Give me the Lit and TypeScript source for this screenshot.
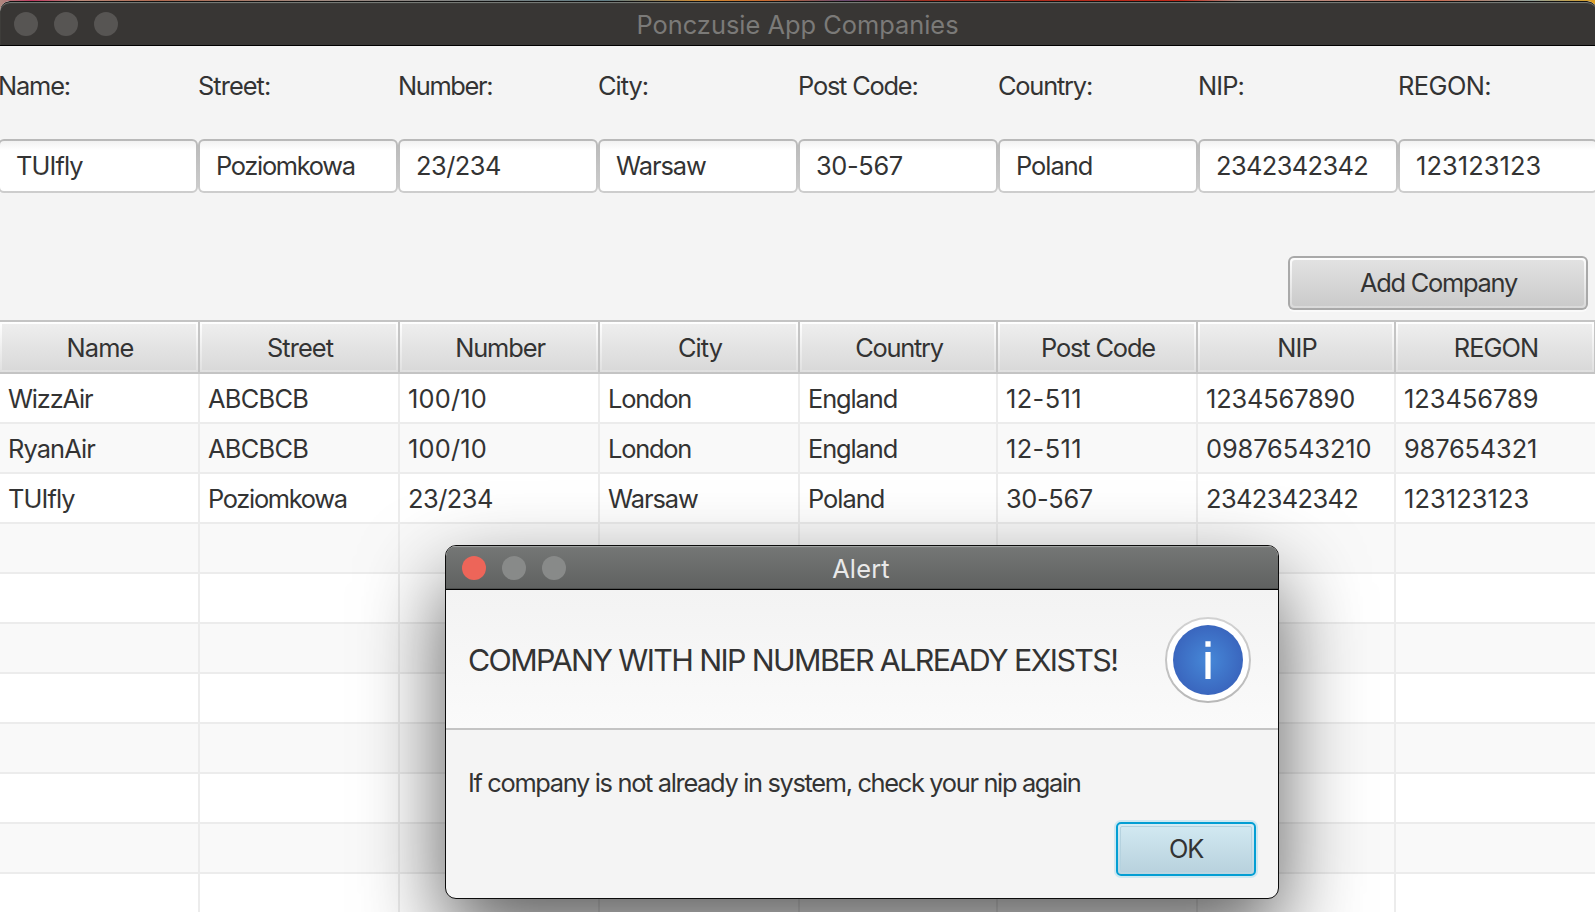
import { LitElement, html, css } from "lit";
import { customElement } from "lit/decorators.js";

const COLUMNS = ["Name", "Street", "Number", "City", "Country", "Post Code", "NIP", "REGON"];

const FIELDS = [
  { label: "Name:", value: "TUIfly" },
  { label: "Street:", value: "Poziomkowa" },
  { label: "Number:", value: "23/234" },
  { label: "City:", value: "Warsaw" },
  { label: "Post Code:", value: "30-567" },
  { label: "Country:", value: "Poland" },
  { label: "NIP:", value: "2342342342" },
  { label: "REGON:", value: "123123123" },
];

const ROWS: string[][] = [
  ["WizzAir", "ABCBCB", "100/10", "London", "England", "12-511", "1234567890", "123456789"],
  ["RyanAir", "ABCBCB", "100/10", "London", "England", "12-511", "09876543210", "987654321"],
  ["TUIfly", "Poziomkowa", "23/234", "Warsaw", "Poland", "30-567", "2342342342", "123123123"],
  ...Array.from({ length: 8 }, () => Array(8).fill("")),
];

// Optical tracking in pixels; strings without an entry use the inherited value.
const TRACKING: Record<string, number> = {
  "Name:": -1.15, "Street:": -0.95, "Number:": -1.35, "City:": -1, "Post Code:": -1.2,
  "Country:": -1.2, "REGON:": -0.55, "Poziomkowa": -1.3, "23/234": -0.5, "Warsaw": -1.05,
  "30-567": -0.35, "Poland": -1, "2342342342": -0.6, "123123123": 0.1, "100/10": 0.2,
  "12-511": 0.4, "1234567890": -0.15, "123456789": 0, "09876543210": -0.1, "987654321": -0.15,
  "WizzAir": -1.15, "ABCBCB": -0.7, "London": -1.2, "England": -1.1, "Number": -1.1,
  "Country": -1.25, "Post Code": -1.15,
};

const text = (s: string) =>
  s in TRACKING ? html`<span style="letter-spacing:${TRACKING[s]}px">${s}</span>` : html`<span>${s}</span>`;

const base = css`
  * { box-sizing: border-box; }
  :host {
    font-family: Inter, "Liberation Sans", sans-serif;
    font-size: 25.4px;
    letter-spacing: -0.9px;
    color: #333;
  }
  .lights { display: flex; gap: 16px; }
  .light { width: 24px; height: 24px; border-radius: 50%; }
`;

@customElement("company-form")
export class CompanyForm extends LitElement {
  static styles = [base, css`
    :host { display: block; }
    .fields { display: flex; width: 1600px; margin-left: -2px; padding-top: 22px; }
    .field { flex: 0 0 200px; }
    .label { height: 36px; line-height: 36px; margin-bottom: 35px; white-space: nowrap; }
    .box {
      height: 54px; width: 200px; border-radius: 6px; padding: 2px;
      background: linear-gradient(#b9b9b9, #cdcdcd);
    }
    .input {
      height: 50px; border-radius: 4px; line-height: 50px; padding-left: 16px;
      background: linear-gradient(#f1f1f1, #fff 9px);
    }
    .actions { display: flex; justify-content: flex-end; padding: 63px 9px 10px 0; }
    .btn {
      width: 300px; height: 54px; border-radius: 6px; padding: 2px; background: #a9a9a9;
      box-shadow: 0 2px 0 #fafafa;
    }
    .rim { height: 50px; border-radius: 4px; padding: 2px; background: linear-gradient(#fdfdfd, #d9d9d9); }
    .face {
      height: 46px; border-radius: 3px; background: linear-gradient(#e2e2e2, #cbcbcb);
      text-align: center; line-height: 46px; padding-left: 1px; letter-spacing: -1.25px;
    }
  `];
  render() {
    return html`
      <div class="fields">
        ${FIELDS.map((f) => html`
          <div class="field">
            <div class="label">${text(f.label)}</div>
            <div class="box"><div class="input">${text(f.value)}</div></div>
          </div>`)}
      </div>
      <div class="actions"><div class="btn"><div class="rim"><div class="face">Add Company</div></div></div></div>
    `;
  }
}

@customElement("company-table")
export class CompanyTable extends LitElement {
  static styles = [base, css`
    :host { display: block; width: 1596px; border-top: 2px solid #c4c4c4; background: #fff; }
    .row { display: grid; grid-template-columns: 200px 200px 200px 200px 198px 200px 198px 200px; height: 50px; }
    .head { height: 52px; }
    .th {
      border-right: 2px solid #c4c4c4; border-bottom: 2px solid #c4c4c4; padding: 2px;
      background: linear-gradient(#fff, #e0e0e0);
    }
    .inner { height: 46px; background: linear-gradient(#eee, #d9d9d9); text-align: center; line-height: 47px; padding-left: 2px; }
    .td {
      border-right: 2px solid #ececec; border-bottom: 2px solid #ececec;
      padding: 2px 0 0 8px; line-height: 46px; white-space: nowrap;
    }
    .td:last-child { border-right: none; }
    .alt { background: #f9f9f9; }
  `];
  render() {
    return html`
      <div class="row head">${COLUMNS.map((c) => html`<div class="th"><div class="inner">${text(c)}</div></div>`)}</div>
      ${ROWS.map((r, i) => html`
        <div class="row ${i % 2 ? "alt" : ""}">${r.map((c) => html`<div class="td">${text(c)}</div>`)}</div>`)}
    `;
  }
}

@customElement("alert-dialog")
export class AlertDialog extends LitElement {
  static styles = [base, css`
    :host {
      display: block; width: 834px; height: 354px; border: 1px solid #0c0c0c; border-radius: 11px;
      background: #f4f4f4; box-shadow: 0 36px 84px rgba(0, 0, 0, 0.64); overflow: hidden;
    }
    .bar {
      height: 44px; border-bottom: 1px solid #000; display: grid; grid-template-columns: 1fr auto 1fr;
      padding: 1px 18px 0 16px; align-items: center;
      background: linear-gradient(#757776, #5f6160);
      box-shadow: inset 0 2px 1px -1px #a5a7a6, inset 0 -1px 0 #4c4e4d;
    }
    .red { background: #ed6559; }
    .gray { background: #888a89; }
    .title { color: #e9e9e9; letter-spacing: 0.2px; padding-top: 1px; }
    .header {
      height: 140px; border-bottom: 2px solid #c4c4c4; display: flex; justify-content: space-between;
      padding: 27px 27px 0 22px; background: linear-gradient(#f3f3f3, #fafafa);
    }
    .msg { font-size: 30.4px; letter-spacing: -1.6px; line-height: 86px; white-space: nowrap; }
    .body { padding: 35px 0 0 22px; line-height: 36px; height: 92px; letter-spacing: -1.33px; }
    .foot { display: flex; justify-content: flex-end; padding-right: 22px; }
    .ok {
      width: 140px; height: 54px; border: 2px solid #039ed3; border-radius: 5px; padding: 2px;
      background: linear-gradient(#d5ecf5, #bcd5e0); box-shadow: 0 0 0 2px #cfe8f1;
    }
    .face {
      height: 46px; border: 1px solid #b5d2df; border-radius: 2px; line-height: 43px; text-align: center;
      letter-spacing: -1.2px; background: linear-gradient(#d1e8f1, #b9d2de);
    }
  `];
  render() {
    return html`
      <div class="bar">
        <div class="lights"><div class="light red"></div><div class="light gray"></div><div class="light gray"></div></div>
        <div class="title">Alert</div><div></div>
      </div>
      <div class="header">
        <div class="msg">COMPANY WITH NIP NUMBER ALREADY EXISTS!</div>
        <svg width="86" height="86" viewBox="0 0 86 86">
          <defs>
            <radialGradient id="blue"><stop offset="0" stop-color="#4688d8"/><stop offset="1" stop-color="#3a66be"/></radialGradient>
            <linearGradient id="ring" x2="0" y2="1"><stop offset="0" stop-color="#d2d2d2"/><stop offset="1" stop-color="#b8b8b8"/></linearGradient>
          </defs>
          <circle cx="43" cy="43" r="42" fill="#fff" stroke="url(#ring)" stroke-width="2"/>
          <circle cx="43" cy="43" r="35" fill="url(#blue)"/>
          <path d="M40.4 24.2h5.2v5.6h-5.2zM40.4 35h5.2v27h-5.2z" fill="#fff"/>
        </svg>
      </div>
      <div class="body">If company is not already in system, check your nip again</div>
      <div class="foot"><div class="ok"><div class="face">OK</div></div></div>
    `;
  }
}

@customElement("app-root")
export class AppRoot extends LitElement {
  static styles = [base, css`
    :host {
      display: block; position: relative; width: 1595px; height: 912px; overflow: hidden; padding-top: 1px;
      background: linear-gradient(90deg, #b08a80 0, #c03a60 2%, #b98a7a 5%, #b06a50 10%, #a08a80 20%, #607c84 38%, #d08a30 44%, #c86a30 48%, #6a4a70 53%, #a03020 58%, #c02818 74%, #b09a90 78%, #c08070 85%, #c86a50 90%, #90a09a 96%, #e0a020 100%) 0 0 / 100% 12px no-repeat #f4f4f4;
    }
    .window { width: 1597px; height: 911px; background: #f4f4f4; border-radius: 10px 10px 0 0; overflow: hidden; }
    .bar {
      height: 45px; border-top: 1px solid #111; border-bottom: 1px solid #000; background: #383634;
      box-shadow: inset 0 1px 1px #7d807c; border-radius: 10px 10px 0 0;
      display: grid; grid-template-columns: 1fr auto 1fr; padding: 1px 16px 0 14px; align-items: center;
    }
    .light { background: #575553; }
    .title { color: #7b7a78; letter-spacing: 0; padding-top: 1px; }
    .dialog { position: absolute; left: 445px; top: 545px; }
  `];
  render() {
    return html`
      <div class="window">
        <div class="bar">
          <div class="lights"><div class="light"></div><div class="light"></div><div class="light"></div></div>
          <div class="title">Ponczusie App Companies</div><div></div>
        </div>
        <company-form></company-form>
        <company-table></company-table>
      </div>
      <alert-dialog class="dialog"></alert-dialog>
    `;
  }
}
